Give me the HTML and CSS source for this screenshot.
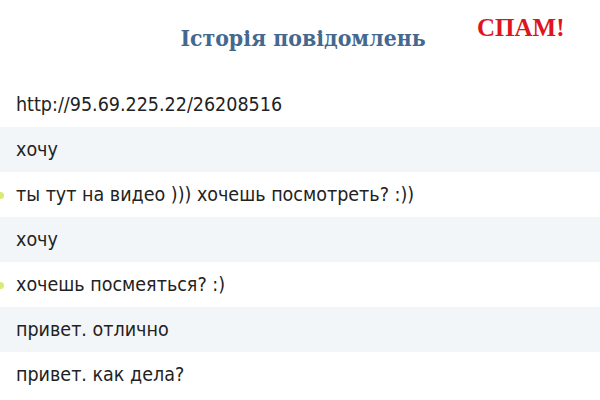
FILE: index.html
```html
<!DOCTYPE html>
<html lang="ru">
<head>
<meta charset="utf-8">
<link rel="stylesheet" href="styles.css">
</head>
<body>
<div class="page">
  <header class="head">
    <h1 class="title">Історія повідомлень</h1>
    <span class="spam">СПАМ!</span>
  </header>
  <ul class="list">
    <li class="row">http://95.69.225.22/26208516</li>
    <li class="row alt">хочу</li>
    <li class="row unread">ты тут на видео ))) хочешь посмотреть? :))</li>
    <li class="row alt">хочу</li>
    <li class="row unread">хочешь посмеяться? :)</li>
    <li class="row alt">привет. отлично</li>
    <li class="row">привет. как дела?</li>
  </ul>
</div>
</body>
</html>
```
FILE: styles.css
```css
html, body {
  margin: 0;
  padding: 0;
  background: #ffffff;
}
.page {
  width: 600px;
  height: 400px;
  overflow: hidden;
}
.head {
  position: relative;
  height: 82px;
  display: flex;
  justify-content: center;
  align-items: flex-start;
}
.title {
  margin: 25px 0 0 6px;
  font-family: "DejaVu Serif Condensed", "DejaVu Serif", serif;
  font-stretch: condensed;
  font-weight: bold;
  font-size: 22.8px;
  color: #45688e;
}
.spam {
  position: absolute;
  left: 477px;
  top: 14px;
  font-family: "Liberation Serif", serif;
  font-weight: bold;
  font-size: 25px;
  color: #e0141e;
}
.list {
  list-style: none;
  margin: 0;
  padding: 0;
}
.row {
  position: relative;
  height: 45px;
  line-height: 45px;
  padding-left: 16px;
  font-family: "DejaVu Sans Condensed", "DejaVu Sans", sans-serif;
  font-stretch: condensed;
  font-size: 19.5px;
  color: #222222;
}
.alt {
  background: #f3f6f9;
}
.unread::before {
  content: "";
  position: absolute;
  left: -3px;
  top: 20px;
  width: 7px;
  height: 7px;
  border-radius: 50%;
  background: #dce978;
}
```
